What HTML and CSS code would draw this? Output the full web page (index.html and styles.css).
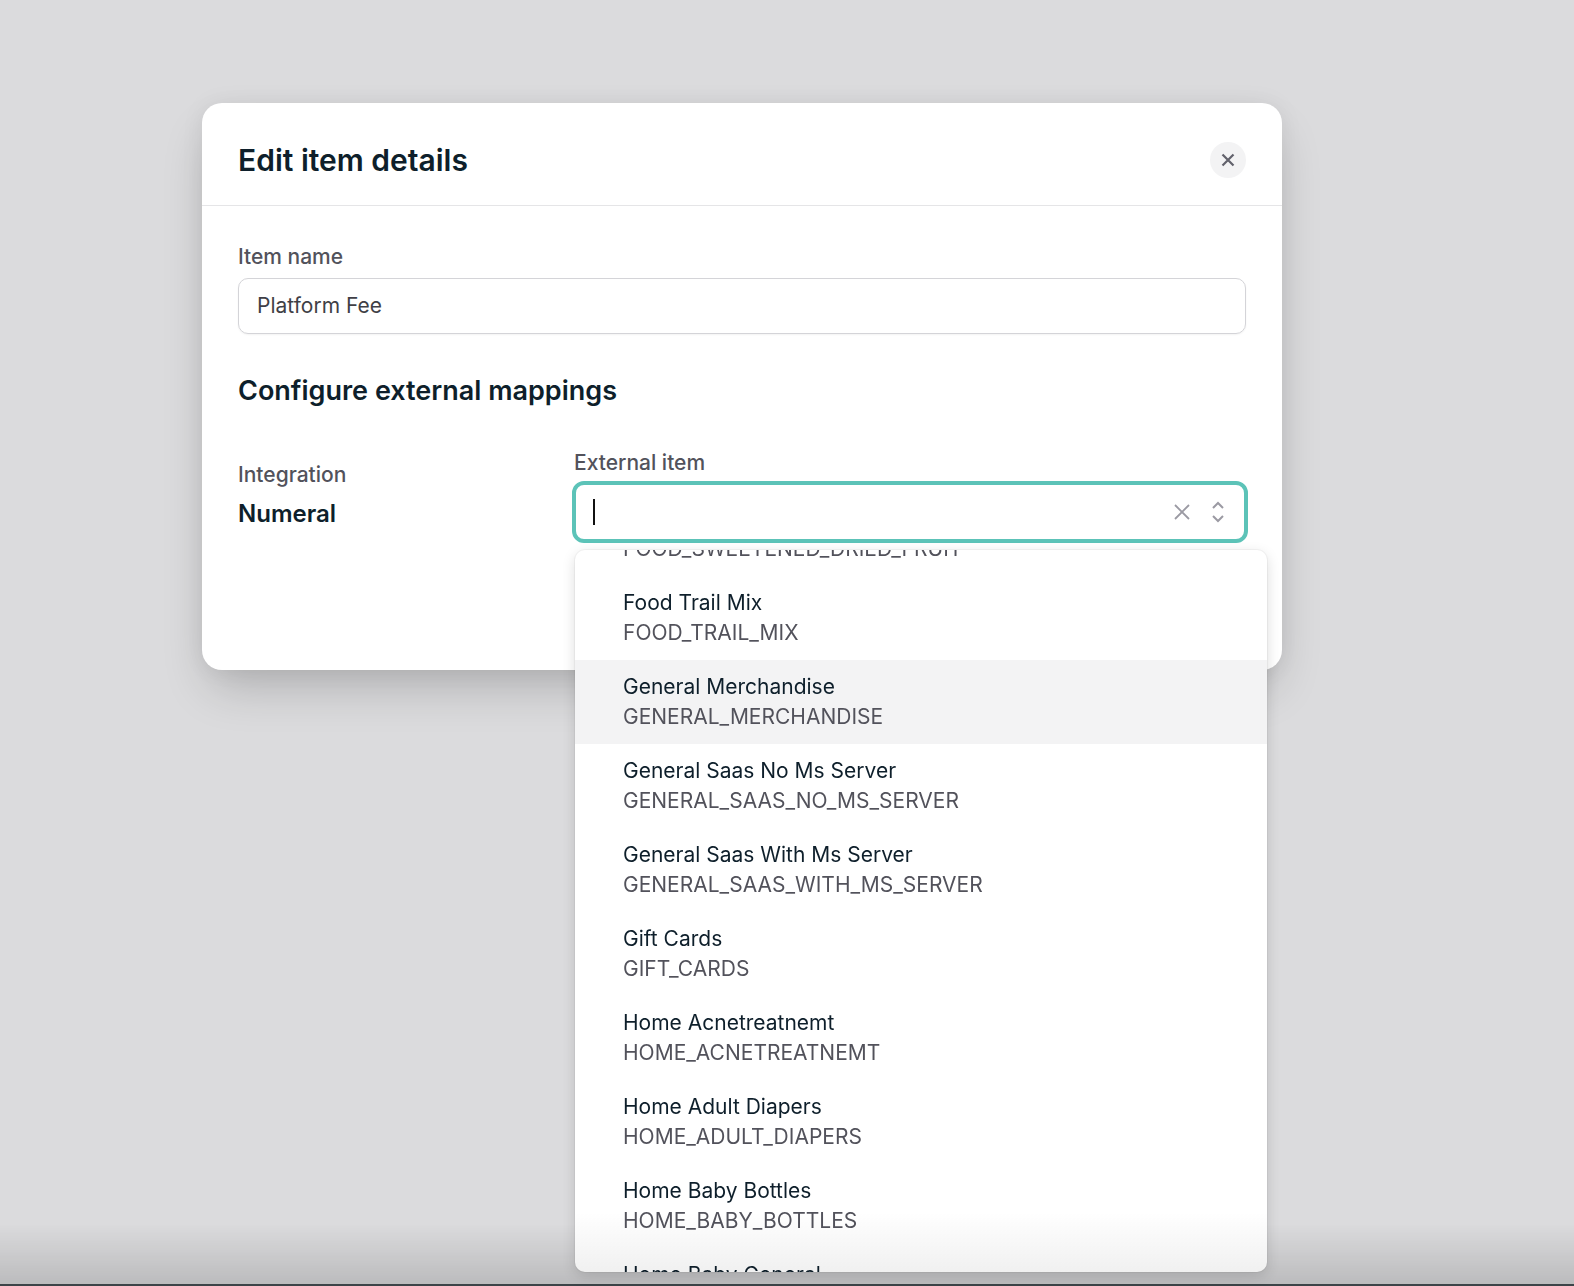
FILE: index.html
```html
<!DOCTYPE html>
<html lang="en">
<head>
<meta charset="UTF-8">
<meta name="viewport" content="width=device-width, initial-scale=1.0">
<title>Edit item details</title>
<link rel="stylesheet" href="styles.css">
</head>
<body>
    <main class="backdrop">
        <section class="modal">
            <header class="modal-header">
                <h1 class="modal-title">Edit item details</h1>
                <button class="close-button" aria-label="Close">
                    <svg width="16" height="16" viewBox="0 0 16 16" fill="none" stroke="#62626c" stroke-width="2.2">
                        <path d="M2.5 2.5 13.5 13.5M13.5 2.5 2.5 13.5"/>
                    </svg>
                </button>
            </header>
            <div class="modal-body">
                <label class="field-label">Item name</label>
                <div class="text-input">Platform Fee</div>
                <h2 class="section-title">Configure external mappings</h2>
                <div class="mapping-row">
                    <div class="integration">
                        <div class="field-label">Integration</div>
                        <div class="integration-name">Numeral</div>
                    </div>
                    <div class="external-item">
                        <label class="field-label external-label">External item</label>
                        <div class="select-box">
                            <span class="caret"></span>
                            <svg class="clear-icon" width="18" height="18" viewBox="0 0 18 18" fill="none" stroke="#9b9aa3" stroke-width="1.8">
                                <path d="M2 2 16 16M16 2 2 16"/>
                            </svg>
                            <svg class="updown-icon" width="14" height="24" viewBox="0 0 14 24" fill="none" stroke="#9b9aa3" stroke-width="2">
                                <path d="M2 8 7 3l5 5M2 16l5 5 5-5"/>
                            </svg>
                        </div>
                        <div class="dropdown">
                            <ul class="option-list">
                                <li class="option"><span class="option-name">Food Sweetened Dried Fruit</span><span class="option-code">FOOD_SWEETENED_DRIED_FRUIT</span></li>
                                <li class="option"><span class="option-name">Food Trail Mix</span><span class="option-code">FOOD_TRAIL_MIX</span></li>
                                <li class="option active"><span class="option-name">General Merchandise</span><span class="option-code">GENERAL_MERCHANDISE</span></li>
                                <li class="option"><span class="option-name">General Saas No Ms Server</span><span class="option-code">GENERAL_SAAS_NO_MS_SERVER</span></li>
                                <li class="option"><span class="option-name">General Saas With Ms Server</span><span class="option-code">GENERAL_SAAS_WITH_MS_SERVER</span></li>
                                <li class="option"><span class="option-name">Gift Cards</span><span class="option-code">GIFT_CARDS</span></li>
                                <li class="option"><span class="option-name">Home Acnetreatnemt</span><span class="option-code">HOME_ACNETREATNEMT</span></li>
                                <li class="option"><span class="option-name">Home Adult Diapers</span><span class="option-code">HOME_ADULT_DIAPERS</span></li>
                                <li class="option"><span class="option-name">Home Baby Bottles</span><span class="option-code">HOME_BABY_BOTTLES</span></li>
                                <li class="option"><span class="option-name">Home Baby General</span><span class="option-code">HOME_BABY_GENERAL</span></li>
                            </ul>
                        </div>
                    </div>
                </div>
            </div>
        </section>
    </main>
    <div class="bottom-fade"></div>
    <div class="bottom-line"></div>
</body>
</html>
```

FILE: styles.css
```css
/* Page */
html, body {
    height: 100%;
}

body {
    margin: 0;
    overflow: hidden;
    font-family: Inter, "Noto Sans", sans-serif;
    background-color: #dbdbdd;
    color: #0e1f2b;
}

.backdrop {
    padding: 103px 0 0 202px;
}

/* Modal */
.modal {
    width: 1080px;
    height: 567px;
    background-color: #fff;
    border-radius: 20px;
    box-shadow: 0 24px 48px -8px rgba(0, 0, 0, 0.2), 0 0 24px rgba(0, 0, 0, 0.06);
}

.modal-header {
    display: flex;
    align-items: center;
    justify-content: space-between;
    height: 103px;
    padding: 12px 36px 0;
    box-sizing: border-box;
    border-bottom: 1px solid #e5e5e7;
}

.modal-title {
    margin: 0;
    font-size: 30px;
    font-weight: 600;
}

.close-button {
    display: flex;
    align-items: center;
    justify-content: center;
    width: 36px;
    height: 36px;
    padding: 0;
    border: none;
    border-radius: 50%;
    background-color: #f3f3f4;
}

.modal-body {
    padding: 36px 36px 0;
}

.field-label {
    display: block;
    font-size: 21px;
    line-height: 30px;
    font-weight: 500;
    color: #52525b;
}

.text-input {
    display: flex;
    align-items: center;
    height: 56px;
    margin-top: 6px;
    padding: 0 18px 2px;
    box-sizing: border-box;
    border: 1px solid #d4d4d8;
    border-radius: 10px;
    font-size: 21px;
    color: #3f3f46;
    box-shadow: 0 1px 2px rgba(0, 0, 0, 0.05);
}

.section-title {
    margin: 37px 0 0;
    font-size: 27px;
    line-height: 40px;
    font-weight: 600;
}

/* Mapping row */
.mapping-row {
    display: flex;
    margin-top: 37px;
}

.integration {
    width: 334px;
    padding-top: 12px;
}

.integration-name {
    margin-top: 9px;
    font-size: 24px;
    line-height: 30px;
    font-weight: 600;
}

.external-item {
    position: relative;
    flex: 1;
    margin-right: -2px;
}

.external-label {
    margin-left: 2px;
}

.select-box {
    display: flex;
    align-items: center;
    height: 62px;
    margin-top: 3px;
    padding: 0 19px 0 17px;
    box-sizing: border-box;
    border: 4px solid #5cc3b8;
    border-radius: 12px;
}

.caret {
    width: 2px;
    height: 26px;
    background-color: #111;
}

.clear-icon {
    margin-left: auto;
}

.updown-icon {
    margin-left: 20px;
}

/* Dropdown */
.dropdown {
    position: absolute;
    top: 102px;
    left: 3px;
    z-index: 1;
    width: 692px;
    height: 722px;
    overflow: hidden;
    background-color: #fff;
    border-radius: 10px;
    box-shadow: 0 0 0 1px rgba(0, 0, 0, 0.04), 0 4px 14px rgba(0, 0, 0, 0.14);
}

/* Weaker fade than the one on the backdrop */
.dropdown::after {
    content: "";
    position: absolute;
    left: 0;
    right: 0;
    bottom: 0;
    height: 60px;
    background: linear-gradient(rgba(0, 0, 0, 0), rgba(0, 0, 0, 0.06));
}

.option-list {
    list-style: none;
    margin: -58px 0 0;
    padding: 0;
}

.option {
    display: flex;
    flex-direction: column;
    justify-content: center;
    height: 84px;
    padding-left: 48px;
    font-size: 21px;
    line-height: 30px;
}

.option.active {
    background-color: #f3f3f4;
}

.option-code {
    color: #52525b;
}

/* Bottom of the window */
.bottom-fade {
    position: fixed;
    left: 0;
    right: 0;
    bottom: 2px;
    height: 60px;
    background: linear-gradient(rgba(0, 0, 0, 0), rgba(0, 0, 0, 0.14));
}

.bottom-line {
    position: fixed;
    left: 0;
    right: 0;
    bottom: 0;
    height: 2px;
    background-color: #3c4448;
}
```
